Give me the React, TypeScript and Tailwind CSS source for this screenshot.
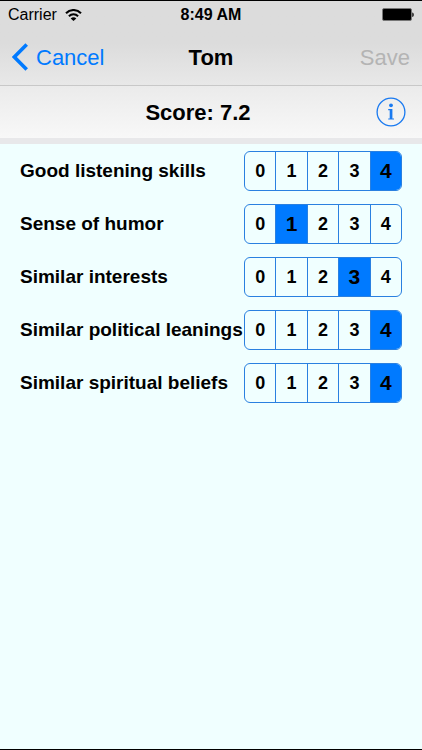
import { useState } from "react";

const ratings = [0, 1, 2, 3, 4];

const initialTraits = [
  { id: "listening", name: "Good listening skills", value: 4 },
  { id: "humor", name: "Sense of humor", value: 1 },
  { id: "interests", name: "Similar interests", value: 3 },
  { id: "political", name: "Similar political leanings", value: 4 },
  { id: "spiritual", name: "Similar spiritual beliefs", value: 4 },
];

type RatingProps = { id: string; name: string; value: number; onChange: (v: number) => void };

function StatusBar() {
  return (
    <div className="grid h-7 grid-cols-3 items-center px-2 text-base text-black">
      <div className="flex items-center gap-2">
        <span>Carrier</span>
        <svg width="17" height="13" viewBox="0 0 17 13" fill="none" stroke="black" strokeWidth="2" aria-label="Wi-Fi">
          <path d="M1 4.2 C5.2 -0.1 11.8 -0.1 16 4.2" />
          <path d="M3.9 7.2 C6.5 4.6 10.5 4.6 13.1 7.2" />
          <path d="M8.5 12 L5.7 9.4 C7.2 8 9.8 8 11.3 9.4 Z" fill="black" stroke="none" />
        </svg>
      </div>
      <span className="text-center font-bold whitespace-nowrap">8:49 AM</span>
      <svg className="justify-self-end" width="32" height="14" viewBox="0 0 32 14" aria-label="Battery full">
        <rect x="0.5" y="0.5" width="29" height="12" rx="1.5" fill="black" stroke="#777" />
        <path d="M30.3 4.5 C32.2 5 32.2 8.5 30.3 9 Z" fill="black" />
      </svg>
    </div>
  );
}

function Rating({ id, name, value, onChange }: RatingProps) {
  return (
    <div role="radiogroup" aria-labelledby={id} className="flex items-center">
      <span id={id} className="min-w-0 flex-1 text-[19px] font-bold whitespace-nowrap">
        {name}
      </span>
      <div className="flex h-10 w-[158px] shrink-0 divide-x divide-[#2a80e0] overflow-hidden rounded-md border border-[#2a80e0]">
        {ratings.map((r) => (
          <label
            key={r}
            className="relative flex flex-1 cursor-pointer items-center justify-center text-[18px] font-bold has-checked:bg-[#007aff] has-checked:text-[21px]"
          >
            <input
              type="radio"
              name={id}
              value={r}
              checked={value === r}
              onChange={() => onChange(r)}
              className="sr-only"
            />
            {r}
          </label>
        ))}
      </div>
    </div>
  );
}

export default function App() {
  const [traits, setTraits] = useState(initialTraits);

  return (
    <div className="flex min-h-screen flex-col border-y border-black bg-[#f0ffff] font-['Liberation_Sans',Arial,sans-serif] text-black">
      <header className="border-b border-[#c8c8c8] bg-linear-to-b from-[#dcdcdc] from-50% to-[#e8e8e8]">
        <StatusBar />
        <nav className="grid h-14 grid-cols-3 items-center px-3">
          <button type="button" className="flex items-center gap-2 text-[22px] text-[#007aff]">
            <svg width="16" height="28" viewBox="0 0 16 28" fill="none" stroke="currentColor" strokeWidth="3.6" aria-hidden="true">
              <path d="M14.7 1.4 L2.3 14 L14.7 26.6" />
            </svg>
            Cancel
          </button>
          <h1 className="text-center text-[22px] font-bold">Tom</h1>
          <button type="button" disabled className="justify-self-end text-[22px] text-[#b4b4b4]">
            Save
          </button>
        </nav>
      </header>
      <section className="flex h-[58px] items-center border-b-6 border-[#e8e8ea] bg-linear-to-b from-[#ebebeb] to-[#f8f8f8] pr-4 pl-5">
        <p className="flex-1 text-center text-[22px] font-bold">Score: 7.2</p>
        <button type="button" aria-label="Info" className="text-[#1a7af0]">
          <svg width="30" height="30" viewBox="0 0 30 30" aria-hidden="true">
            <circle cx="15" cy="15" r="13.9" fill="none" stroke="currentColor" strokeWidth="1.3" />
            <circle cx="15" cy="8.3" r="1.9" fill="currentColor" />
            <path d="M12.2 12 H16.4 V21.4 H18 V22.6 H12.2 V21.4 H13.7 V13.2 H12.2 Z" fill="currentColor" />
          </svg>
        </button>
      </section>
      <main className="flex flex-1 flex-col gap-[13px] px-5 pt-[7px]">
        {traits.map((t, i) => (
          <Rating
            key={t.id}
            id={t.id}
            name={t.name}
            value={t.value}
            onChange={(v) => setTraits(traits.map((x, j) => (j === i ? { ...x, value: v } : x)))}
          />
        ))}
      </main>
    </div>
  );
}
